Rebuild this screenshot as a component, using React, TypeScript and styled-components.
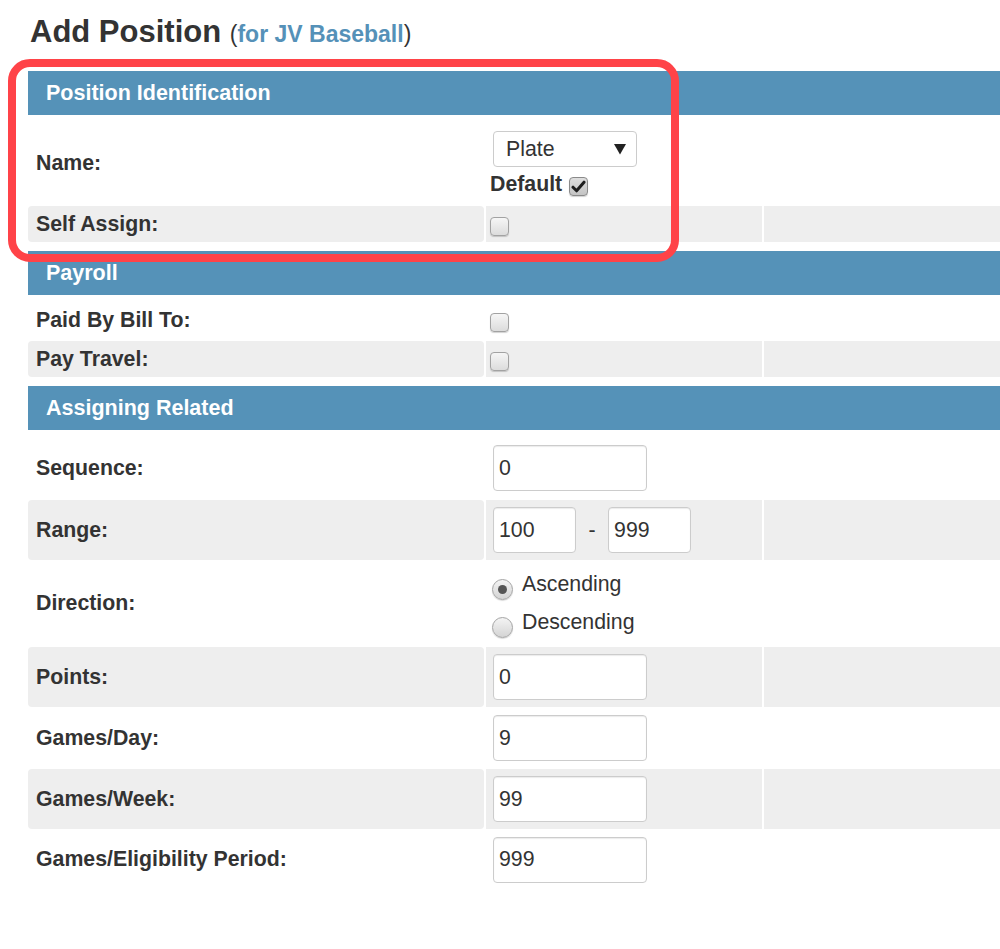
import React from "react";
import styled, { createGlobalStyle } from "styled-components";

const GlobalStyle = createGlobalStyle`
  html, body {
    margin: 0;
    padding: 0;
    background: #ffffff;
    overflow: hidden;
  }
  body {
    font-family: "Liberation Sans", Arial, Helvetica, sans-serif;
    color: #333333;
  }
`;

const Page = styled.div`
  position: relative;
  width: 1012px;
  padding: 16px 0 40px 28px;
`;

const Title = styled.h1`
  margin: 0 0 21px 2px;
  font-size: 31px;
  line-height: 31px;
  font-weight: bold;
  color: #333333;
`;

const TitleSub = styled.span`
  font-size: 23px;
  font-weight: normal;
  color: #333333;
`;

const TitleLink = styled.span`
  font-weight: bold;
  color: #5591b8;
`;

const Section = styled.section`
  & + & {
    margin-top: 9px;
  }
`;

const SectionHeader = styled.div`
  height: 44px;
  display: flex;
  align-items: center;
  padding-left: 18px;
  background: #5592b8;
  color: #ffffff;
  font-size: 21.5px;
  font-weight: bold;
`;

const Row = styled.div<{ $h: number }>`
  display: grid;
  grid-template-columns: 456px 276px 1fr;
  column-gap: 2px;
  height: ${(p) => p.$h}px;
  box-sizing: border-box;
`;

const Cell = styled.div<{ $shaded?: boolean; $pt?: number }>`
  display: flex;
  align-items: center;
  box-sizing: border-box;
  padding-top: ${(p) => p.$pt ?? 0}px;
  background: ${(p) => (p.$shaded ? "#eeeeee" : "transparent")};
`;

const LabelCell = styled(Cell)`
  padding-left: 8px;
  border-radius: 4px;
  font-size: 21.3px;
  font-weight: bold;
  color: #333333;
`;

const ValueCell = styled(Cell)<{ $stack?: boolean }>`
  padding-left: 4px;
  flex-direction: ${(p) => (p.$stack ? "column" : "row")};
  align-items: ${(p) => (p.$stack ? "flex-start" : "center")};
`;

const SelectBox = styled.div`
  width: 144px;
  height: 36px;
  margin-left: 3px;
  box-sizing: border-box;
  border: 1px solid #cccccc;
  border-radius: 4px;
  background: #ffffff;
  display: flex;
  align-items: center;
  justify-content: space-between;
  padding: 0 10px 0 12px;
  font-size: 21.3px;
  color: #333333;
`;

const DefaultLine = styled.div`
  display: flex;
  align-items: flex-start;
  margin-top: 6px;
  height: 24px;
`;

const DefaultText = styled.span`
  font-size: 21.3px;
  line-height: 22px;
  font-weight: bold;
  color: #333333;
`;

const Box = styled.span<{ $checked?: boolean; $mt?: number; $ml?: number }>`
  display: inline-flex;
  align-items: center;
  justify-content: center;
  width: 19px;
  height: 19px;
  margin-top: ${(p) => p.$mt ?? 4}px;
  margin-left: ${(p) => p.$ml ?? 0}px;
  box-sizing: border-box;
  border: 1px solid ${(p) => (p.$checked ? "#8a8a8a" : "#a2a2a2")};
  border-radius: 4px;
  background: ${(p) =>
    p.$checked
      ? "linear-gradient(#dedede, #c4c4c4)"
      : "linear-gradient(#f6f6f6, #dcdcdc)"};
  box-shadow: 0 1px 1px rgba(0, 0, 0, 0.18);
`;

const RadioStack = styled.div`
  display: flex;
  flex-direction: column;
`;

const RadioOption = styled.label`
  display: flex;
  align-items: center;
  height: 38px;
  font-size: 21.3px;
  color: #333333;
`;

const RadioDot = styled.span<{ $checked?: boolean }>`
  display: inline-flex;
  align-items: center;
  justify-content: center;
  width: 21px;
  height: 21px;
  margin: 9px 9px 0 2px;
  box-sizing: border-box;
  border: 1px solid #a5a5a5;
  border-radius: 50%;
  background: linear-gradient(#f4f4f4, #d4d4d4);
  box-shadow: 0 1px 1px rgba(0, 0, 0, 0.15);

  &::after {
    content: "";
    display: ${(p) => (p.$checked ? "block" : "none")};
    width: 9px;
    height: 9px;
    border-radius: 50%;
    background: #555555;
  }
`;

const TextInput = styled.input<{ $w: number; $ml?: number }>`
  width: ${(p) => p.$w}px;
  height: 46px;
  margin: 0 0 0 ${(p) => p.$ml ?? 3}px;
  box-sizing: border-box;
  padding: 0 5px;
  border: 1px solid #cccccc;
  border-radius: 4px;
  box-shadow: inset 0 1px 1px rgba(0, 0, 0, 0.08);
  background: #ffffff;
  font-family: "Liberation Sans", Arial, sans-serif;
  font-size: 21.3px;
  color: #333333;
  outline: none;
`;

const Dash = styled.span`
  margin: 0 12.5px;
  font-size: 21.3px;
  color: #333333;
`;

const Highlight = styled.div`
  position: absolute;
  left: 8px;
  top: 59px;
  width: 671px;
  height: 203px;
  box-sizing: border-box;
  border: 8px solid #ff4348;
  border-radius: 22px;
  pointer-events: none;
`;

const Check = () => (
  <svg width="15" height="13" viewBox="0 0 15 13">
    <path
      d="M2 7.2 L5.6 10.8 L13 2.2"
      fill="none"
      stroke="#1e1e1e"
      strokeWidth="3"
      strokeLinecap="round"
      strokeLinejoin="round"
    />
  </svg>
);

const Arrow = () => (
  <svg width="12" height="11" viewBox="0 0 12 11">
    <path d="M0 0 H12 L6 10.5 Z" fill="#222222" />
  </svg>
);

type InputRowProps = {
  label: string;
  value: string;
  shaded?: boolean;
  h: number;
  pt?: number;
};

const InputRow = ({ label, value, shaded, h, pt }: InputRowProps) => (
  <Row $h={h}>
    <LabelCell $shaded={shaded} $pt={pt}>{label}</LabelCell>
    <ValueCell $shaded={shaded} $pt={pt}>
      <TextInput $w={154} defaultValue={value} readOnly />
    </ValueCell>
    <Cell $shaded={shaded} />
  </Row>
);

type CheckRowProps = {
  label: string;
  shaded?: boolean;
  h: number;
  pt?: number;
};

const CheckRow = ({ label, shaded, h, pt }: CheckRowProps) => (
  <Row $h={h}>
    <LabelCell $shaded={shaded} $pt={pt}>{label}</LabelCell>
    <ValueCell $shaded={shaded} $pt={pt}>
      <Box />
    </ValueCell>
    <Cell $shaded={shaded} />
  </Row>
);

export default function App() {
  return (
    <>
      <GlobalStyle />
      <Page>
        <Title>
          Add Position{" "}
          <TitleSub>
            (<TitleLink>for JV Baseball</TitleLink>)
          </TitleSub>
        </Title>

        <Section>
          <SectionHeader>Position Identification</SectionHeader>
          <Row $h={91}>
            <LabelCell $pt={5}>Name:</LabelCell>
            <ValueCell $stack $pt={16}>
              <SelectBox>
                <span>Plate</span>
                <Arrow />
              </SelectBox>
              <DefaultLine>
                <DefaultText>Default</DefaultText>
                <Box $checked $ml={7} $mt={4}>
                  <Check />
                </Box>
              </DefaultLine>
            </ValueCell>
            <Cell />
          </Row>
          <CheckRow label="Self Assign:" shaded h={36} />
        </Section>

        <Section>
          <SectionHeader>Payroll</SectionHeader>
          <CheckRow label="Paid By Bill To:" h={46} pt={5} />
          <CheckRow label="Pay Travel:" shaded h={36} />
        </Section>

        <Section>
          <SectionHeader>Assigning Related</SectionHeader>
          <InputRow label="Sequence:" value="0" h={70} pt={6} />
          <Row $h={60}>
            <LabelCell $shaded>Range:</LabelCell>
            <ValueCell $shaded>
              <TextInput $w={83} defaultValue="100" readOnly />
              <Dash>-</Dash>
              <TextInput $w={83} $ml={0} defaultValue="999" readOnly />
            </ValueCell>
            <Cell $shaded />
          </Row>
          <Row $h={87}>
            <LabelCell>Direction:</LabelCell>
            <ValueCell>
              <RadioStack>
                <RadioOption>
                  <RadioDot $checked />
                  Ascending
                </RadioOption>
                <RadioOption>
                  <RadioDot />
                  Descending
                </RadioOption>
              </RadioStack>
            </ValueCell>
            <Cell />
          </Row>
          <InputRow label="Points:" value="0" shaded h={60} />
          <InputRow label="Games/Day:" value="9" h={62} />
          <InputRow label="Games/Week:" value="99" shaded h={60} />
          <InputRow label="Games/Eligibility Period:" value="999" h={61} />
        </Section>

        <Highlight />
      </Page>
    </>
  );
}
